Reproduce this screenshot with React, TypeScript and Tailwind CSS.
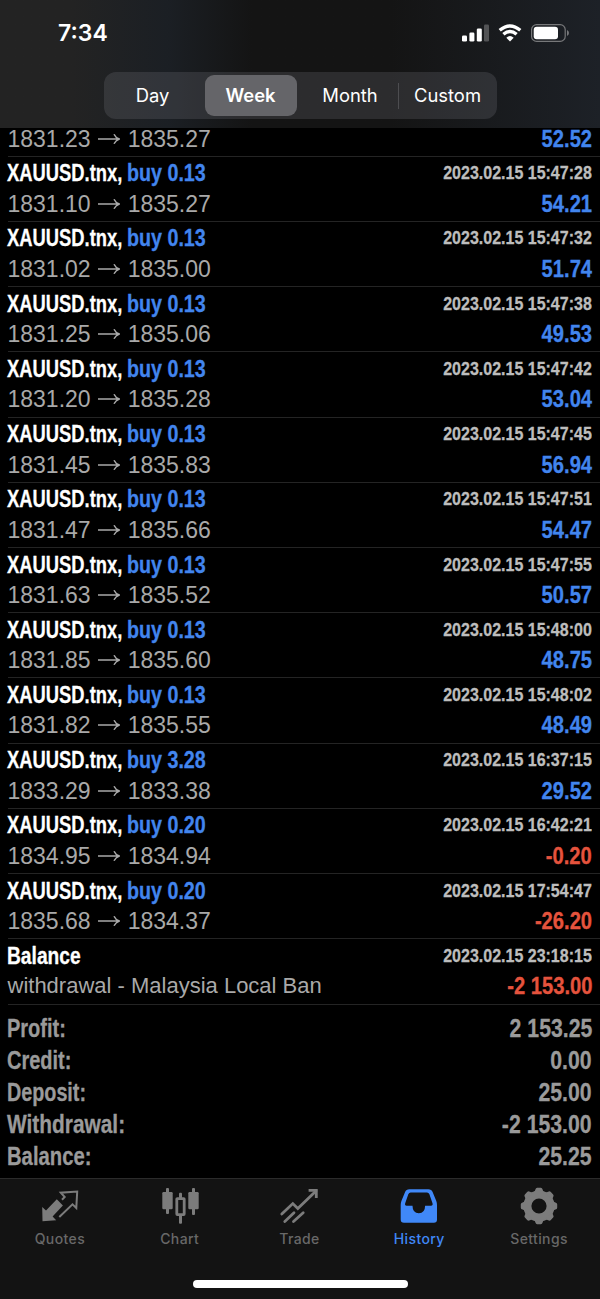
import type { ReactNode } from 'react';

interface Deal {
  volume: string;
  time: string;
  open: string;
  close: string;
  profit: string;
}

const deals: Deal[] = [
  { volume: '0.13', time: '2023.02.15 15:47:28', open: '1831.10', close: '1835.27', profit: '54.21' },
  { volume: '0.13', time: '2023.02.15 15:47:32', open: '1831.02', close: '1835.00', profit: '51.74' },
  { volume: '0.13', time: '2023.02.15 15:47:38', open: '1831.25', close: '1835.06', profit: '49.53' },
  { volume: '0.13', time: '2023.02.15 15:47:42', open: '1831.20', close: '1835.28', profit: '53.04' },
  { volume: '0.13', time: '2023.02.15 15:47:45', open: '1831.45', close: '1835.83', profit: '56.94' },
  { volume: '0.13', time: '2023.02.15 15:47:51', open: '1831.47', close: '1835.66', profit: '54.47' },
  { volume: '0.13', time: '2023.02.15 15:47:55', open: '1831.63', close: '1835.52', profit: '50.57' },
  { volume: '0.13', time: '2023.02.15 15:48:00', open: '1831.85', close: '1835.60', profit: '48.75' },
  { volume: '0.13', time: '2023.02.15 15:48:02', open: '1831.82', close: '1835.55', profit: '48.49' },
  { volume: '3.28', time: '2023.02.15 16:37:15', open: '1833.29', close: '1833.38', profit: '29.52' },
  { volume: '0.20', time: '2023.02.15 16:42:21', open: '1834.95', close: '1834.94', profit: '-0.20' },
  { volume: '0.20', time: '2023.02.15 17:54:47', open: '1835.68', close: '1834.37', profit: '-26.20' },
];

const summary = [
  { label: 'Profit:', value: '2 153.25', squeeze: 'scale-x-[0.8]' },
  { label: 'Credit:', value: '0.00', squeeze: 'scale-x-[0.8]' },
  { label: 'Deposit:', value: '25.00', squeeze: 'scale-x-[0.79]' },
  { label: 'Withdrawal:', value: '-2 153.00', squeeze: 'scale-x-[0.835]' },
  { label: 'Balance:', value: '25.25', squeeze: 'scale-x-[0.81]' },
];

// Bold face squeezed horizontally, used wherever the list shows condensed text
const condensedLeft = '-ml-px inline-block origin-left whitespace-nowrap font-bold leading-[24px] [-webkit-text-stroke:0.3px_currentColor]';
const condensedRight = 'inline-block origin-right whitespace-nowrap font-bold leading-[24px] [-webkit-text-stroke:0.3px_currentColor]';

function Amount({ value }: { value: string }) {
  const color = value.startsWith('-') ? 'text-[#e5533d]' : 'text-[#4285ee]';
  return <span className={`${condensedRight} scale-x-[0.84] text-[24px] ${color}`}>{value}</span>;
}

function Prices({ open, close }: { open: string; close: string }) {
  return (
    <span className="-ml-[0.5px] flex items-center text-[23px] leading-[24px] text-[#a9a9a9]">
      {open}
      <svg className="ml-[7px] mr-[8px] h-[12px] w-[22px]" viewBox="0 0 22 12" fill="none" stroke="currentColor" strokeWidth="1.5">
        <path d="M0 6H21M16 1.2Q17.5 4.6 21.3 6Q17.5 7.4 16 10.8" />
      </svg>
      {close}
    </span>
  );
}

interface RowProps {
  title: ReactNode;
  time: string;
  detail: ReactNode;
  amount: string;
}

function Row({ title, time, detail, amount }: RowProps) {
  return (
    <div className="ml-[8px] h-[65.23px] shrink-0 border-b border-[#242424] pr-[8px] pt-px">
      <div className="flex h-[31px] items-center justify-between">
        {title}
        <span className={`${condensedRight} scale-x-[0.865] text-[18.5px] text-[#bdbdbd]`}>{time}</span>
      </div>
      <div className="flex h-[30px] items-center justify-between">
        {detail}
        <Amount value={amount} />
      </div>
    </div>
  );
}

function DealTitle({ volume }: { volume: string }) {
  return (
    <span className="flex items-center text-[24px] text-white">
      <span className="flex w-[120px]">
        <span className={`${condensedLeft} scale-x-[0.765]`}>XAUUSD.tnx,</span>
      </span>
      <span className={`${condensedLeft} scale-x-[0.82] text-[#4285ee]`}>buy {volume}</span>
    </span>
  );
}

function StatusBar() {
  return (
    <div className="flex h-[72px] justify-between pl-[58px] pr-[31px] pt-[19px]">
      <span className="h-[28px] text-[23px] font-semibold leading-[28px] text-white">7:34</span>
      <div className="flex h-[28px] items-center text-white">
        <svg className="h-[18px] w-[27px]" viewBox="0 0 27 18" fill="currentColor">
          <rect x="0" y="11.5" width="5" height="6" rx="1.3" />
          <rect x="7.4" y="8.5" width="5" height="9" rx="1.3" />
          <rect x="14.8" y="4.5" width="5" height="13" rx="1.3" />
          <rect x="22" y="0.5" width="5" height="17" rx="1.3" opacity="0.25" />
        </svg>
        <svg className="ml-[9px] h-[18px] w-[24px]" viewBox="0 0 24 18" fill="none" stroke="currentColor" strokeWidth="3.4">
          <path d="M1.7 6.2Q12 -2.4 22.3 6.2" />
          <path d="M5.4 10.3Q12 4.8 18.6 10.3" />
          <path d="M8.3 13.7Q12 10.2 15.7 13.7L12 17.4Z" fill="currentColor" stroke="none" />
        </svg>
        <svg className="ml-[9px] h-[18px] w-[38px]" viewBox="0 0 38 18">
          <rect x="0.6" y="0.6" width="33.6" height="16.8" rx="5" fill="none" stroke="#77787a" strokeWidth="1.2" />
          <rect x="2.7" y="2.7" width="24.3" height="12.6" rx="3" fill="currentColor" />
          <path d="M36 6V12Q38 11 38 9T36 6Z" fill="#77787a" />
        </svg>
      </div>
    </div>
  );
}

function PeriodPicker() {
  return (
    <div className="mx-auto flex h-[47px] w-[393px] items-center rounded-[12px] bg-[#7c7d86]/23 text-[18.4px] text-white">
      <span className="w-[101px] pr-[3px] text-center">Day</span>
      <span className="h-[41px] w-[92px] rounded-[9px] bg-[#656569] text-center font-semibold leading-[41px]">Week</span>
      <span className="w-[101px] pl-[6px] text-center">Month</span>
      <span className="h-[26px] w-px bg-[#4d4d50]" />
      <span className="flex-1 text-center">Custom</span>
    </div>
  );
}

function QuotesIcon() {
  return (
    <>
      <path d="M2.2 21L6 24.4L16.8 13.2L22.9 19.5L12.6 30.5L16.2 34.2L2.5 35.2Z" fill="currentColor" />
      <path d="M22 13.8L24.7 11L20.8 6.7L37.2 5.5L36.3 22L32.5 18.3L19.3 31" fill="none" stroke="currentColor" strokeWidth="2" />
    </>
  );
}

function ChartIcon() {
  return (
    <g fill="currentColor">
      <rect x="2.3" y="6" width="10.4" height="17.3" rx="1.2" />
      <rect x="6" y="2" width="3" height="26" rx="1" />
      <rect x="16.8" y="12.6" width="7.4" height="16" rx="0.5" fill="none" stroke="currentColor" strokeWidth="2.8" />
      <rect x="19" y="6.7" width="3" height="5.5" rx="1" />
      <rect x="19" y="29" width="3" height="8.7" rx="1" />
      <rect x="28.3" y="6" width="10.4" height="17.3" rx="1.2" />
      <rect x="32" y="2" width="3" height="27" rx="1" />
    </g>
  );
}

function TradeIcon() {
  return (
    <g fill="none" stroke="currentColor" strokeWidth="2.8">
      <path d="M2.8 28L13.8 17.6L18.8 22.6L37 5" strokeLinecap="round" />
      <path d="M29.6 4.4H37.3V12" />
      <path d="M5.8 35.5L15 26.8M14.5 35.5L24.2 26.8" strokeLinecap="round" />
    </g>
  );
}

function HistoryIcon() {
  return (
    <path
      fill="currentColor"
      fillRule="evenodd"
      d="M10.4 3.3H29.3Q32.5 3.3 33.6 6L37.3 15Q38 17 38 19V33.5Q38 36.7 34.8 36.7H5Q1.7 36.7 1.7 33.5V19Q1.7 17 2.4 15L6.1 6Q7.2 3.3 10.4 3.3ZM11.6 6.5Q10 6.5 9.3 8.2L6.2 17.3Q5.5 19.7 7.6 19.7H13.5Q13.6 27.2 19.8 27.2T26.1 19.7H32Q34.2 19.7 33.5 17.3L30.4 8.2Q29.7 6.5 28 6.5Z"
    />
  );
}

function SettingsIcon() {
  return (
    <>
      <circle cx="20" cy="20" r="11.6" fill="none" stroke="currentColor" strokeWidth="8" />
      {[0, 45, 90, 135, 180, 225, 270, 315].map((angle) => (
        <path
          key={angle}
          d="M14.6 6.2Q16 5.6 16.4 3.6Q16.8 1.8 18.2 1.8H21.8Q23.2 1.8 23.6 3.6Q24 5.6 25.4 6.2Z"
          fill="currentColor"
          transform={`rotate(${angle} 20 20)`}
        />
      ))}
    </>
  );
}

const tabs = [
  { label: 'Quotes', icon: <QuotesIcon /> },
  { label: 'Chart', icon: <ChartIcon /> },
  { label: 'Trade', icon: <TradeIcon /> },
  { label: 'History', icon: <HistoryIcon />, active: true },
  { label: 'Settings', icon: <SettingsIcon /> },
];

export default function App() {
  return (
    <div className="flex h-[1299px] w-[600px] flex-col overflow-hidden bg-black font-['Liberation_Sans',sans-serif]">
      <header className="h-[128px] shrink-0 bg-linear-to-r from-[#232323] from-12% via-[#1b1f24] via-28% to-[#141414] to-42% font-['Inter',sans-serif]">
        <div className="h-full bg-linear-to-r from-transparent from-65% to-[#1d2127]">
          <StatusBar />
          <PeriodPicker />
        </div>
      </header>

      <main className="flex h-[1050px] shrink-0 flex-col">
        <div className="ml-[8px] flex h-[28.7px] shrink-0 items-start justify-between border-b border-[#242424] pr-[8px]">
          <div className="-mt-px flex w-full items-center justify-between">
            <Prices open="1831.23" close="1835.27" />
            <Amount value="52.52" />
          </div>
        </div>
        {deals.map((deal) => (
          <Row
            key={deal.time}
            title={<DealTitle volume={deal.volume} />}
            time={deal.time}
            detail={<Prices open={deal.open} close={deal.close} />}
            amount={deal.profit}
          />
        ))}
        <Row
          title={<span className={`${condensedLeft} scale-x-[0.8] text-[24px] text-white`}>Balance</span>}
          time="2023.02.15 23:18:15"
          detail={<span className="-ml-[0.5px] text-[22px] leading-[24px] text-[#a9a9a9]">withdrawal - Malaysia Local Ban</span>}
          amount="-2 153.00"
        />
        <div className="px-[8px] pt-[8px]">
          {summary.map(({ label, value, squeeze }) => (
            <div key={label} className="flex h-[31.9px] items-center justify-between text-[25px] text-[#9a9a9a]">
              <span className={`${condensedLeft} ${squeeze}`}>{label}</span>
              <span className={`${condensedRight} scale-x-[0.85]`}>{value}</span>
            </div>
          ))}
        </div>
      </main>

      <nav className="flex h-[121px] shrink-0 flex-col border-t border-[#2b2b2b] bg-[#131313] font-['Inter',sans-serif]">
        <div className="flex pt-[7px]">
          {tabs.map((tab) => (
            <div key={tab.label} className={`flex w-[119.8px] flex-col items-center ${tab.active ? 'text-[#4088f8]' : 'text-[#7c7c7c]'}`}>
              <svg className="h-[40px] w-[40px]" viewBox="0 0 40 40">{tab.icon}</svg>
              <span className={`mt-[3px] text-[14px] font-medium leading-[20px] tracking-[0.4px] ${tab.active ? '' : 'text-[#686868]'}`}>{tab.label}</span>
            </div>
          ))}
        </div>
        <div className="mx-auto mt-[31px] h-[8px] w-[215px] rounded-full bg-white" />
      </nav>
    </div>
  );
}
